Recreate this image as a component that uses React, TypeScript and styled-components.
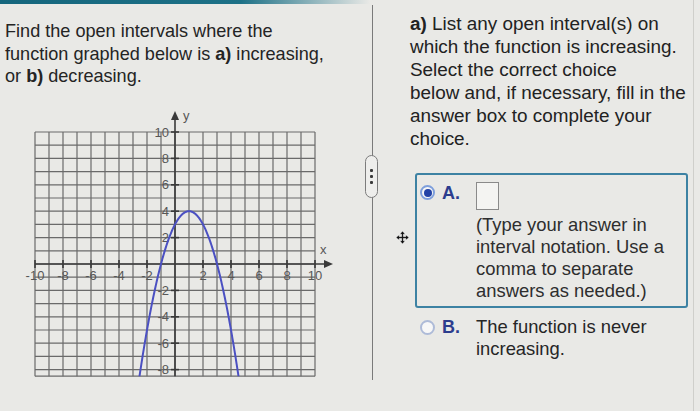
import React from 'react'
import styled, { createGlobalStyle } from 'styled-components'

const GlobalStyle = createGlobalStyle`
  html, body {
    margin: 0;
    padding: 0;
    background: #e9e9e6;
  }
  body {
    font-family: "Liberation Sans", Arial, sans-serif;
    color: #262626;
  }
`

const Page = styled.div`
  position: relative;
  display: flex;
  width: 700px;
  height: 411px;
  overflow: hidden;
  background: #e9e9e6;
`

const LeftPanel = styled.section`
  width: 372px;
  flex-shrink: 0;
  display: flex;
  flex-direction: column;
`

const TopStrip = styled.div`
  height: 4px;
  width: 370px;
  background: linear-gradient(90deg, #15667d 0%, #1d7187 65%, rgba(29, 113, 135, 0) 100%);
`

const Prompt = styled.p`
  margin: 0;
  padding: 16px 0 0 5px;
  font-size: 18.1px;
  line-height: 22.5px;
  color: #242424;
`

const GraphWrap = styled.div`
  margin: 20px 0 0 20px;
`

const Divider = styled.div`
  position: relative;
  align-self: flex-start;
  width: 1px;
  height: 375px;
  margin-top: 5px;
  background: #7a7a7a;
  flex-shrink: 0;
`

const Handle = styled.div`
  position: absolute;
  top: 150px;
  left: -7px;
  width: 13px;
  height: 43px;
  box-sizing: border-box;
  border: 1px solid #7c7c7c;
  border-radius: 7px;
  background: #eeeeec;
  display: flex;
  flex-direction: column;
  align-items: center;
  justify-content: center;
  gap: 3px;
`

const Dot = styled.span`
  width: 3px;
  height: 3px;
  border-radius: 1px;
  background: #3a3a3a;
`

const RightPanel = styled.section`
  flex: 1;
  padding: 12px 0 0 37px;
  border-right: 1px solid #cfcfcb;
  margin-right: 6px;
`

const Question = styled.p`
  margin: 0;
  font-size: 18.9px;
  line-height: 23px;
  color: #222;
`

const ChoiceBox = styled.div`
  margin: 23px 0 0 5px;
  width: 273px;
  box-sizing: border-box;
  border: 2px solid #3d82a3;
  border-radius: 3px;
  padding: 7px 0 4px 3px;
  display: flex;
  align-items: flex-start;
`

const ChoiceRow = styled.div`
  margin: 8px 0 0 5px;
  padding-left: 5px;
  display: flex;
  align-items: flex-start;
`

const Radio = styled.span<{ $checked?: boolean }>`
  width: 15px;
  height: 15px;
  box-sizing: border-box;
  margin-top: ${p => (p.$checked ? '3px' : '4px')};
  margin-right: 7px;
  border-radius: 50%;
  border: 2px solid ${p => (p.$checked ? '#7e9fdc' : '#aebbd8')};
  background: #f7f7f7;
  display: flex;
  align-items: center;
  justify-content: center;
  flex-shrink: 0;

  &::after {
    content: '';
    display: ${p => (p.$checked ? 'block' : 'none')};
    width: 8px;
    height: 8px;
    border-radius: 50%;
    background: #2443a6;
  }
`

const Letter = styled.span`
  width: 34px;
  flex-shrink: 0;
  font-size: 18px;
  line-height: 22px;
  font-weight: bold;
  color: #2c3d8e;
`

const ChoiceBody = styled.div`
  display: flex;
  flex-direction: column;
`

const AnswerInput = styled.span`
  display: block;
  width: 23px;
  height: 28px;
  box-sizing: border-box;
  border: 1.5px solid #8a8a8a;
  background: #f4f4f2;
`

const Hint = styled.p`
  margin: 4px 0 0 0;
  font-size: 18.4px;
  line-height: 22px;
  color: #2e2e2e;
`

const ChoiceText = styled.p`
  margin: 0;
  font-size: 18.4px;
  line-height: 22px;
  color: #262626;
`

const MoveCursor = styled.svg`
  position: absolute;
  left: 395px;
  top: 230px;
`

// graph geometry
const GX = 15
const GY = 24
const UX = 14
const UY = 13.2
const OX = GX + 10 * UX
const OY = GY + 10 * UY
const YMIN = -8.5
const GB = OY - YMIN * UY

const px = (x: number) => OX + x * UX
const py = (y: number) => OY - y * UY

function curvePath() {
  const pts: string[] = []
  for (let x = -3; x <= 5.001; x += 0.05) {
    const y = -x * x + 2 * x + 3
    pts.push(`${px(x).toFixed(2)},${py(y).toFixed(2)}`)
  }
  return 'M' + pts.join(' L')
}

function Graph() {
  const cols = Array.from({ length: 21 }, (_, i) => i - 10)
  const rows = Array.from({ length: 19 }, (_, i) => 10 - i)
  const xLabels = [-10, -8, -6, -4, -2, 2, 4, 6, 8, 10]
  const yLabels = [10, 8, 6, 4, 2, -2, -4, -6, -8]
  return (
    <svg width="320" height="275" viewBox="0 0 320 275">
      <defs>
        <clipPath id="gridClip">
          <rect x={GX} y={GY} width={20 * UX} height={GB - GY} />
        </clipPath>
      </defs>
      <g stroke="#6a6a6a" strokeWidth="1.2">
        {cols.map(c => (
          <line key={'c' + c} x1={px(c)} y1={GY} x2={px(c)} y2={GB} />
        ))}
        {rows.map(r => (
          <line key={'r' + r} x1={GX} y1={py(r)} x2={GX + 20 * UX} y2={py(r)} />
        ))}
        <line x1={GX} y1={GB} x2={GX + 20 * UX} y2={GB} />
      </g>
      <g stroke="#3a3a3a" strokeWidth="1.6">
        <line x1={OX} y1={GB} x2={OX} y2={8} />
        <line x1={GX} y1={OY} x2={308} y2={OY} />
        {xLabels.map(v => (
          <line key={'tx' + v} x1={px(v)} y1={OY - 4} x2={px(v)} y2={OY + 4} />
        ))}
        {yLabels.map(v => (
          <line key={'ty' + v} x1={OX - 4} y1={py(v)} x2={OX + 4} y2={py(v)} />
        ))}
      </g>
      <polygon points={`${OX},3 ${OX - 4},12 ${OX + 4},12`} fill="#3a3a3a" />
      <polygon points={`313,${OY} 304,${OY - 4} 304,${OY + 4}`} fill="#3a3a3a" />
      <g fontFamily="Liberation Sans, Arial, sans-serif" fontSize="13" fill="#575757">
        <text x={OX + 8} y={12}>y</text>
        <text x={300} y={OY - 10}>x</text>
        {xLabels.map(v => (
          <text key={'lx' + v} x={px(v)} y={OY + 16} textAnchor="middle">
            {v}
          </text>
        ))}
        {yLabels.map(v => (
          <text key={'ly' + v} x={OX - 6} y={py(v) + 4.5} textAnchor="end">
            {v}
          </text>
        ))}
      </g>
      <path
        d={curvePath()}
        clipPath="url(#gridClip)"
        fill="none"
        stroke="#4b50c2"
        strokeWidth="2"
      />
    </svg>
  )
}

export default function App() {
  return (
    <>
      <GlobalStyle />
      <Page>
        <LeftPanel>
          <TopStrip />
          <Prompt>
            Find the open intervals where the
            <br />
            function graphed below is <b>a)</b> increasing,
            <br />
            or <b>b)</b> decreasing.
          </Prompt>
          <GraphWrap>
            <Graph />
          </GraphWrap>
        </LeftPanel>
        <Divider>
          <Handle>
            <Dot />
            <Dot />
            <Dot />
          </Handle>
        </Divider>
        <RightPanel>
          <Question>
            <b>a)</b> List any open interval(s) on
            <br />
            which the function is increasing.
            <br />
            Select the correct choice
            <br />
            below and, if necessary, fill in the
            <br />
            answer box to complete your
            <br />
            choice.
          </Question>
          <ChoiceBox>
            <Radio $checked />
            <Letter>A.</Letter>
            <ChoiceBody>
              <AnswerInput />
              <Hint>
                (Type your answer in
                <br />
                interval notation. Use a
                <br />
                comma to separate
                <br />
                answers as needed.)
              </Hint>
            </ChoiceBody>
          </ChoiceBox>
          <ChoiceRow>
            <Radio />
            <Letter>B.</Letter>
            <ChoiceText>
              The function is never
              <br />
              increasing.
            </ChoiceText>
          </ChoiceRow>
        </RightPanel>
        <MoveCursor width="15" height="15" viewBox="0 0 16 16">
          <path d="M8 1 L11 4.5 H9 V7 H11.5 V5 L15 8 L11.5 11 V9 H9 V11.5 H11 L8 15 L5 11.5 H7 V9 H4.5 V11 L1 8 L4.5 5 V7 H7 V4.5 H5 Z" fill="#111" stroke="#fff" strokeWidth="0.6" />
        </MoveCursor>
      </Page>
    </>
  )
}
